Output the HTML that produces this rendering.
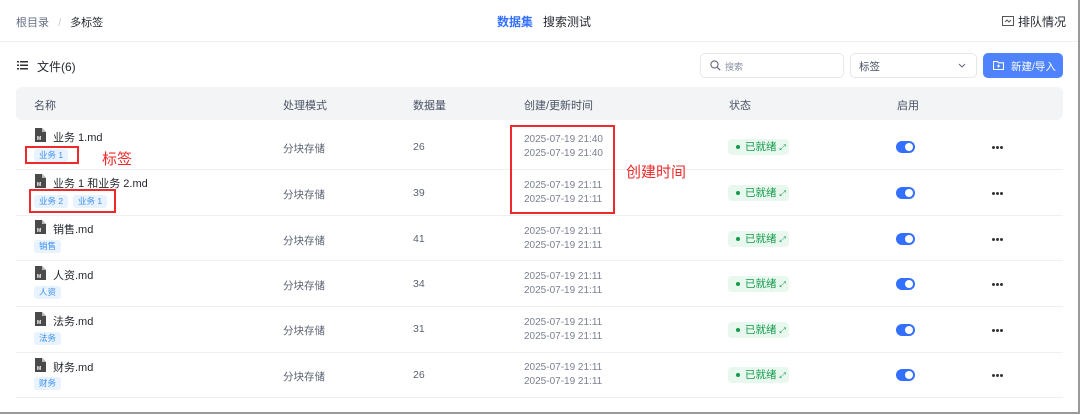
<!DOCTYPE html>
<html><head><meta charset="utf-8"><style>
*{margin:0;padding:0;box-sizing:border-box}
body{width:1080px;height:415px;background:#fff;font-family:"Liberation Sans","Noto Sans CJK SC",sans-serif;position:relative;overflow:hidden;color:#24282f}
.a{position:absolute;white-space:nowrap}
.frame{position:absolute;left:0;top:0;width:1080px;height:414px;border-right:2px solid #9a9a9a;border-bottom:2px solid #9a9a9a}
.hd{font-size:11px;color:#485264}
.c{font-size:10.5px;color:#5b6270}
.dt{font-size:10px;color:#7a8190;line-height:14px}
.tag{position:absolute;height:13px;font-size:8.5px;background:#e8f3ff;border-radius:3px;padding:0 5px;line-height:13px;color:#3b8ff0}
.st{position:absolute;left:728px;width:61px;height:16px;background:#e9f8ee;border-radius:4px;font-size:10.5px;color:#139a4b;line-height:16px;padding-left:17px}
.st:before{content:"";position:absolute;left:8px;top:6px;width:4px;height:4px;border-radius:50%;background:#139a4b}
.sw{position:absolute;left:896px;width:19px;height:12px;border-radius:6px;background:#3370ff}
.sw:after{content:"";position:absolute;right:2px;top:2px;width:8px;height:8px;border-radius:50%;background:#fff}
.dots{position:absolute;left:992px;width:13px;height:3px}
.dots i{position:absolute;top:0;width:3px;height:3px;border-radius:50%;background:#333}
.sep{position:absolute;left:16px;width:1047px;height:1px;background:#eef0f3}
.red{position:absolute;border:2px solid #ee2a2a}
</style></head><body>
<div class="a" style="left:16px;top:14px;font-size:11px;color:#667085">根目录 <span style="color:#c8ccd3;margin:0 6px">/</span> <span style="color:#24282f">多标签</span></div>
<div class="a" style="left:497px;top:13px;font-size:12px;color:#3370ff;font-weight:bold">数据集</div>
<div class="a" style="left:543px;top:13px;font-size:12px;color:#24282f">搜索测试</div>
<svg class="a" style="left:1002px;top:16px" width="12" height="10" viewBox="0 0 12 10"><rect x="0.5" y="0.5" width="11" height="9" fill="none" stroke="#555" stroke-width="1"/><path d="M3 6l2-2 2 2 2-2" fill="none" stroke="#555"/></svg>
<div class="a" style="left:1018px;top:13px;font-size:12px;color:#24282f">排队情况</div>
<div style="position:absolute;left:0;top:41px;width:1080px;height:1px;background:#eef0f3"></div>
<svg class="a" style="left:17px;top:61px" width="11" height="9" viewBox="0 0 11 9"><g fill="#333"><rect x="0" y="0" width="2" height="1.5"/><rect x="3" y="0" width="8" height="1.5"/><rect x="0" y="3.5" width="2" height="1.5"/><rect x="3" y="3.5" width="8" height="1.5"/><rect x="0" y="7" width="2" height="1.5"/><rect x="3" y="7" width="8" height="1.5"/></g></svg>
<div class="a" style="left:37px;top:58px;font-size:12px;color:#24282f">文件(6)</div>
<div class="a" style="left:700px;top:53px;width:144px;height:25px;border:1px solid #e5e7eb;border-radius:5px"></div>
<svg class="a" style="left:710px;top:60px" width="11" height="11" viewBox="0 0 11 11"><circle cx="4.5" cy="4.5" r="3.6" fill="none" stroke="#667" stroke-width="1.1"/><path d="M7.2 7.2l3 3" stroke="#667" stroke-width="1.1"/></svg>
<div class="a" style="left:725px;top:60px;font-size:9px;color:#8a90a0">搜索</div>
<div class="a" style="left:850px;top:53px;width:127px;height:25px;border:1px solid #e5e7eb;border-radius:5px"></div>
<div class="a" style="left:859px;top:59px;font-size:10.5px;color:#485264">标签</div>
<svg class="a" style="left:958px;top:63px" width="8" height="5" viewBox="0 0 8 5"><path d="M1 1l3 3 3-3" fill="none" stroke="#667" stroke-width="1"/></svg>
<div class="a" style="left:983px;top:53px;width:80px;height:25px;background:#4e83fd;border-radius:5px"></div>
<svg class="a" style="left:993px;top:60px" width="11" height="10" viewBox="0 0 11 10"><path d="M0.5 1.5h4l1 1.3h5v6.7h-10z" fill="none" stroke="#fff" stroke-width="1.1"/><path d="M5.5 4.5v3M4 6h3" stroke="#fff"/></svg>
<div class="a" style="left:1011px;top:59px;font-size:10.5px;color:#fff">新建/导入</div>
<div class="a" style="left:16px;top:87px;width:1047px;height:33px;background:#f3f4f6;border-radius:6px"></div>
<div class="a hd" style="left:34px;top:97px">名称</div>
<div class="a hd" style="left:283px;top:97px">处理模式</div>
<div class="a hd" style="left:413px;top:97px">数据量</div>
<div class="a hd" style="left:524px;top:97px">创建/更新时间</div>
<div class="a hd" style="left:729px;top:97px">状态</div>
<div class="a hd" style="left:897px;top:97px">启用</div>

<div class="sep" style="top:169px"></div><div class="sep" style="top:215px"></div><div class="sep" style="top:260px"></div><div class="sep" style="top:306px"></div><div class="sep" style="top:352px"></div><div class="sep" style="top:397px"></div>

<svg class="a" style="left:35px;top:128px" width="11" height="14" viewBox="0 0 11 14"><path d="M0 0h7l4 4v10H0z" fill="#4a4a4a"/><path d="M7 0v4h4" fill="#bbb"/><text x="2" y="12" font-size="5" fill="#fff" font-family="Liberation Sans" font-weight="bold">M</text></svg>
<div class="a" style="left:53px;top:129px;font-size:11px">业务 1.md</div>
<div class="tag" style="left:34px;top:149px">业务 1</div>
<div class="a c" style="left:283px;top:141px">分块存储</div><div class="a c" style="left:413px;top:141px">26</div>
<div class="a dt" style="left:524px;top:133px">2025-07-19 21:40<br>2025-07-19 21:40</div>
<div class="st" style="top:139px">已就绪 <span style="font-size:8px">⤢</span></div><div class="sw" style="top:141px"></div><div class="dots" style="top:146px"><i style="left:0"></i><i style="left:4px"></i><i style="left:8px"></i></div>

<svg class="a" style="left:35px;top:174px" width="11" height="14" viewBox="0 0 11 14"><path d="M0 0h7l4 4v10H0z" fill="#4a4a4a"/><path d="M7 0v4h4" fill="#bbb"/><text x="2" y="12" font-size="5" fill="#fff" font-family="Liberation Sans" font-weight="bold">M</text></svg>
<div class="a" style="left:53px;top:175px;font-size:11px">业务 1 和业务 2.md</div>
<div class="tag" style="left:34px;top:195px">业务 2</div><div class="tag" style="left:73px;top:195px">业务 1</div>
<div class="a c" style="left:283px;top:187px">分块存储</div><div class="a c" style="left:413px;top:187px">39</div>
<div class="a dt" style="left:524px;top:179px">2025-07-19 21:11<br>2025-07-19 21:11</div>
<div class="st" style="top:185px">已就绪 <span style="font-size:8px">⤢</span></div><div class="sw" style="top:187px"></div><div class="dots" style="top:192px"><i style="left:0"></i><i style="left:4px"></i><i style="left:8px"></i></div>

<svg class="a" style="left:35px;top:220px" width="11" height="14" viewBox="0 0 11 14"><path d="M0 0h7l4 4v10H0z" fill="#4a4a4a"/><path d="M7 0v4h4" fill="#bbb"/><text x="2" y="12" font-size="5" fill="#fff" font-family="Liberation Sans" font-weight="bold">M</text></svg>
<div class="a" style="left:53px;top:221px;font-size:11px">销售.md</div>
<div class="tag" style="left:34px;top:240px">销售</div>
<div class="a c" style="left:283px;top:233px">分块存储</div><div class="a c" style="left:413px;top:233px">41</div>
<div class="a dt" style="left:524px;top:225px">2025-07-19 21:11<br>2025-07-19 21:11</div>
<div class="st" style="top:231px">已就绪 <span style="font-size:8px">⤢</span></div><div class="sw" style="top:233px"></div><div class="dots" style="top:238px"><i style="left:0"></i><i style="left:4px"></i><i style="left:8px"></i></div>

<svg class="a" style="left:35px;top:266px" width="11" height="14" viewBox="0 0 11 14"><path d="M0 0h7l4 4v10H0z" fill="#4a4a4a"/><path d="M7 0v4h4" fill="#bbb"/><text x="2" y="12" font-size="5" fill="#fff" font-family="Liberation Sans" font-weight="bold">M</text></svg>
<div class="a" style="left:53px;top:267px;font-size:11px">人资.md</div>
<div class="tag" style="left:34px;top:286px">人资</div>
<div class="a c" style="left:283px;top:278px">分块存储</div><div class="a c" style="left:413px;top:278px">34</div>
<div class="a dt" style="left:524px;top:270px">2025-07-19 21:11<br>2025-07-19 21:11</div>
<div class="st" style="top:276px">已就绪 <span style="font-size:8px">⤢</span></div><div class="sw" style="top:278px"></div><div class="dots" style="top:283px"><i style="left:0"></i><i style="left:4px"></i><i style="left:8px"></i></div>

<svg class="a" style="left:35px;top:312px" width="11" height="14" viewBox="0 0 11 14"><path d="M0 0h7l4 4v10H0z" fill="#4a4a4a"/><path d="M7 0v4h4" fill="#bbb"/><text x="2" y="12" font-size="5" fill="#fff" font-family="Liberation Sans" font-weight="bold">M</text></svg>
<div class="a" style="left:53px;top:313px;font-size:11px">法务.md</div>
<div class="tag" style="left:34px;top:332px">法务</div>
<div class="a c" style="left:283px;top:323px">分块存储</div><div class="a c" style="left:413px;top:323px">31</div>
<div class="a dt" style="left:524px;top:316px">2025-07-19 21:11<br>2025-07-19 21:11</div>
<div class="st" style="top:322px">已就绪 <span style="font-size:8px">⤢</span></div><div class="sw" style="top:324px"></div><div class="dots" style="top:329px"><i style="left:0"></i><i style="left:4px"></i><i style="left:8px"></i></div>

<svg class="a" style="left:35px;top:358px" width="11" height="14" viewBox="0 0 11 14"><path d="M0 0h7l4 4v10H0z" fill="#4a4a4a"/><path d="M7 0v4h4" fill="#bbb"/><text x="2" y="12" font-size="5" fill="#fff" font-family="Liberation Sans" font-weight="bold">M</text></svg>
<div class="a" style="left:53px;top:359px;font-size:11px">财务.md</div>
<div class="tag" style="left:34px;top:377px">财务</div>
<div class="a c" style="left:283px;top:369px">分块存储</div><div class="a c" style="left:413px;top:369px">26</div>
<div class="a dt" style="left:524px;top:361px">2025-07-19 21:11<br>2025-07-19 21:11</div>
<div class="st" style="top:367px">已就绪 <span style="font-size:8px">⤢</span></div><div class="sw" style="top:369px"></div><div class="dots" style="top:374px"><i style="left:0"></i><i style="left:4px"></i><i style="left:8px"></i></div>

<div class="red" style="left:25px;top:146px;width:54px;height:18px"></div>
<div class="a" style="left:102px;top:148px;font-size:15px;color:#ee2a2a">标签</div>
<div class="red" style="left:29px;top:189px;width:87px;height:24px"></div>
<div class="red" style="left:510px;top:125px;width:105px;height:89px"></div>
<div class="a" style="left:626px;top:161px;font-size:15px;color:#ee2a2a">创建时间</div>
<div class="frame"></div>
</body></html>
